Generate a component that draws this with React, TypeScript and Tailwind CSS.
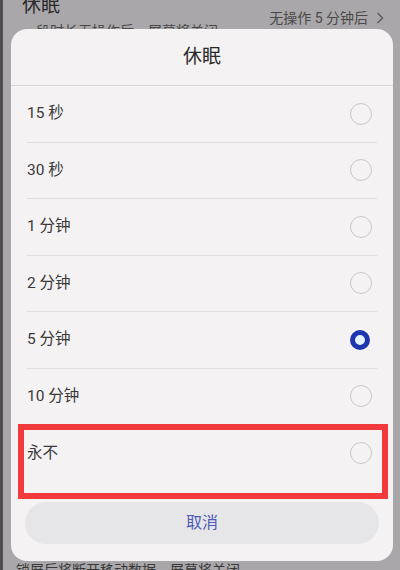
import React from "react";

const options = [
  { label: "15 秒" },
  { label: "30 秒" },
  { label: "1 分钟" },
  { label: "2 分钟" },
  { label: "5 分钟", selected: true },
  { label: "10 分钟" },
  { label: "永不" },
];

const font = { fontFamily: '"Roboto", "Noto Sans CJK SC", sans-serif' };

// Radio indicator, filled ring when selected
const Radio = ({ selected }: { selected?: boolean }) => (
  <div className="w-[24px] h-[24px] flex items-center justify-center mr-[4px]">
    {selected ? (
      <div className="w-[20px] h-[20px] rounded-full border-[5px] border-[#1c37ad] bg-[#e2f1ff] -ml-[3px]" />
    ) : (
      <div className="w-[22px] h-[22px] rounded-full border-[1.5px] border-[#c9c7c9]" />
    )}
  </div>
);

const App = () => {
  return (
    <div
      className="relative w-[400px] h-[570px] overflow-hidden bg-[#a9a7a9] border-l-[3px] border-[#4f4d4f]"
      style={font}
    >
      {/* settings page behind the dialog */}
      <div className="flex justify-between pl-[19px] pr-[16px] -mt-[6px]">
        <div className="flex flex-col">
          <span className="text-[19px] leading-[24px] text-[#2b2a2b]">休眠</span>
          <span className="text-[14px] leading-[20px] mt-[3px] text-[#4a494a]">一段时长无操作后，屏幕将关闭</span>
        </div>
        <div className="flex items-center gap-[8px] mt-[14px] h-[20px] text-[14px] text-[#4a494a]">
          <span>无操作 5 分钟后</span>
          <svg width="8" height="12" viewBox="0 0 8 12" fill="none">
            <path d="M1.5 1 L6.5 6 L1.5 11" stroke="#5a595a" strokeWidth="1.4" />
          </svg>
        </div>
      </div>
      <div className="absolute left-[13px] top-[560px] text-[14px] text-[#3a393a]">
        锁屏后将断开移动数据，屏幕将关闭
      </div>

      {/* sleep dialog */}
      <div className="absolute left-[8px] top-[29px] w-[382px] h-[532px] rounded-[16px] bg-[#f4f2f3] flex flex-col">
        <div className="h-[57px] flex items-center justify-center border-b border-[#d9d7d9] text-[19px] text-[#2a292a]">
          休眠
        </div>
        <div className="flex flex-col px-[16px]">
          {options.map((x, i) => (
            <div
              key={i}
              className={`h-[56.5px] flex items-center justify-between ${
                i < options.length - 1 ? "border-b border-[#e0dee0]" : ""
              }`}
            >
              <span className="text-[15.5px] text-[#3a393a]">{x.label}</span>
              <Radio selected={x.selected} />
            </div>
          ))}
        </div>
        <div className="mx-[14px] mt-[20px] h-[42px] rounded-full bg-[#e6e5e8] flex items-center justify-center text-[16px] text-[#4c5bb7]">
          取消
        </div>

        {/* red annotation box */}
        <div className="absolute left-[7px] top-[395px] w-[370px] h-[75px] border-[6px] border-[#f03a3c]" />
      </div>
    </div>
  );
};

export default App;
